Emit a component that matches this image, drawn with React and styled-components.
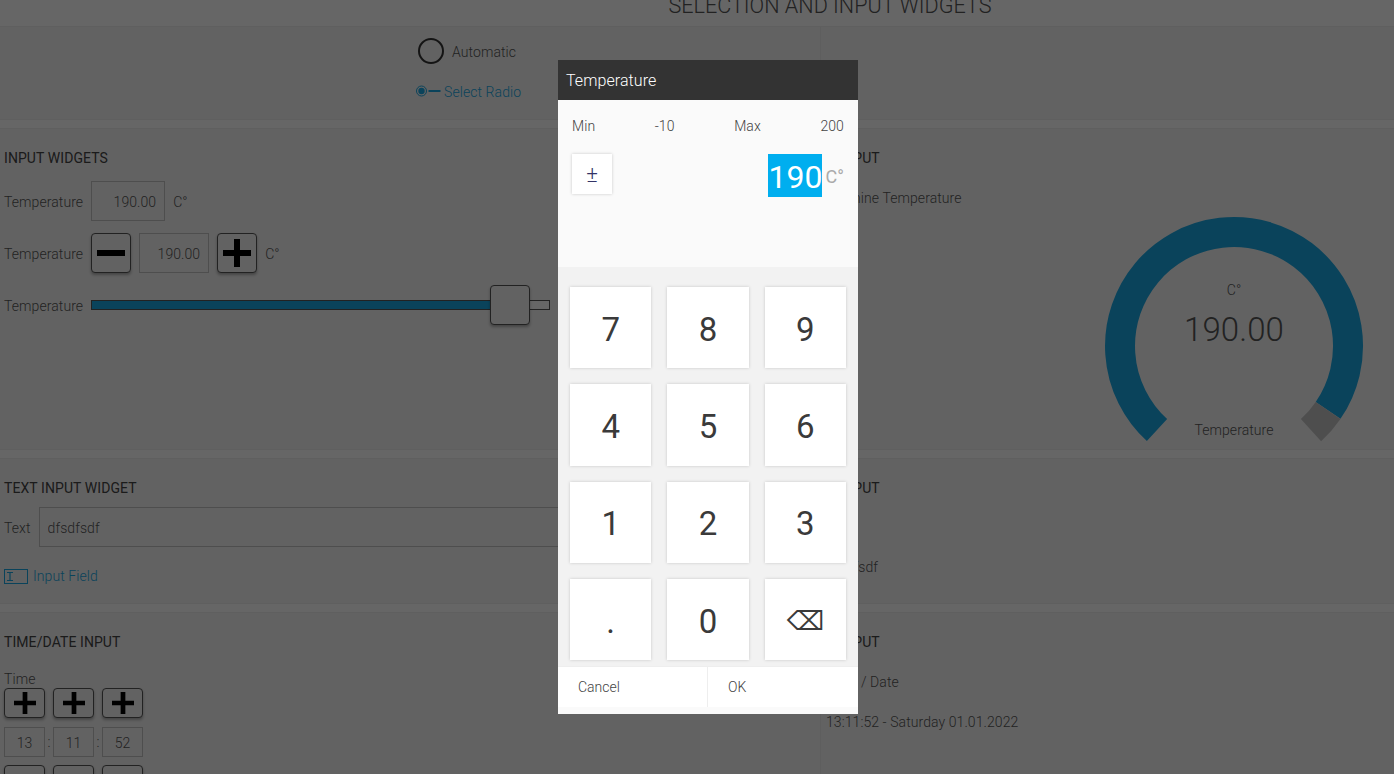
import React from "react";
import styled, { createGlobalStyle } from "styled-components";

const GlobalStyle = createGlobalStyle`
  html, body {
    margin: 0;
    height: 100%;
    overflow: hidden;
    background: #ffffff;
    font-family: Roboto, "Liberation Sans", sans-serif;
    font-weight: 300;
    font-size: 14px;
    letter-spacing: 0.08px;
    color: #555555;
  }
  * {
    box-sizing: border-box;
  }
`;

const ACCENT = "#1aa8e3";
const VALUE = 190;
const MIN = -10;
const MAX = 200;

const Title = styled.h1`
  margin: 0;
  height: 26px;
  padding-left: 266px;
  font-size: 21.6px;
  font-weight: 300;
  letter-spacing: 0;
  line-height: 12px;
  text-align: center;
  text-transform: uppercase;
`;

const Row = styled.section`
  display: grid;
  grid-template-columns: 821px 1fr;
  height: ${(p) => p.$height}px;
  margin-bottom: 8px;
  background: #f5f5f5;
  border-top: 1px solid #ededed;
  border-bottom: 1px solid #ededed;
`;

const LeftCell = styled.div`
  display: flex;
  flex-direction: column;
  padding: 19px 4px 0;
  border-right: 1px solid #ebebeb;
`;

const RightCell = styled.div`
  display: flex;
  flex-direction: column;
  padding: 19px 5px 0;
`;

const RadioCell = styled(LeftCell)`
  padding: 11px 0 0 416px;
`;

const RadioLine = styled.div`
  display: flex;
  align-items: center;
  gap: 8px;
  padding-left: 2px;
`;

const RadioCircle = styled.span`
  width: 26px;
  height: 26px;
  border: 2px solid #333333;
  border-radius: 50%;
`;

const Caption = styled.span`
  height: 20px;
  line-height: 22px;
`;

const SelectLink = styled.div`
  display: flex;
  align-items: center;
  gap: 3px;
  margin-top: 17px;
  height: 20px;
  color: ${ACCENT};
`;

const SectionTitle = styled.h2`
  margin: 0;
  height: 20px;
  color: #444444;
  font-size: 14px;
  font-weight: 400;
  line-height: 20px;
  text-transform: uppercase;
`;

const Stack = styled.div`
  display: flex;
  flex-direction: column;
  gap: 12px;
  margin-top: ${(p) => p.$top}px;
`;

const Field = styled.div`
  display: flex;
  align-items: center;
  gap: 8px;
  height: 40px;
`;

const Box = styled.input`
  width: ${(p) => p.$width}px;
  height: 40px;
  padding: 2px 8px 0;
  border: 1px solid #c4c4c4;
  background: transparent;
  color: #555555;
  font: inherit;
  letter-spacing: inherit;
  text-align: right;
  outline: none;
`;

const TextBox = styled(Box)`
  flex: 1;
  text-align: left;
`;

const PushButton = styled.button`
  display: flex;
  align-items: center;
  justify-content: center;
  width: 40px;
  height: 40px;
  padding: 0;
  border: 1px solid #555555;
  border-radius: 4px;
  background: #f5f5f5;
  box-shadow: 0 2px 3px rgba(0, 0, 0, 0.3);
`;

const SliderTrack = styled.div`
  position: relative;
  flex: 0 0 459px;
  height: 10px;
  border: 1px solid #555555;
  background: #ffffff;
`;

const SliderFill = styled.div`
  height: 100%;
  background: ${ACCENT};
`;

const SliderThumb = styled.div`
  position: absolute;
  top: -16px;
  width: 40px;
  height: 40px;
  border: 1px solid #555555;
  border-radius: 4px;
  background: #f5f5f5;
  box-shadow: 0 2px 3px rgba(0, 0, 0, 0.3);
`;

const HintLink = styled.div`
  display: flex;
  align-items: center;
  gap: 5px;
  height: 20px;
  margin-top: 19px;
  color: ${ACCENT};
`;

const TimeLabel = styled.div`
  margin-top: 18px;
  line-height: 18px;
`;

const TimeGrid = styled.div`
  display: grid;
  grid-template-columns: 41px 8px 41px 8px 41px;
  grid-auto-rows: 30px;
  row-gap: 8.5px;
  align-items: center;
`;

const TimeButton = styled(PushButton)`
  width: 41px;
  height: 30px;
`;

const TimeBox = styled(Box)`
  width: 41px;
  height: 30px;
  padding: 2px 0 0;
  text-align: center;
`;

const Colon = styled.span`
  text-align: center;
`;

const OutputLine = styled.div`
  height: 20px;
  margin-top: ${(p) => p.$top}px;
  line-height: 22px;
`;

const Gauge = styled.div`
  position: relative;
  align-self: flex-end;
  width: 260px;
  height: 232px;
  margin: 9px 25px 0 0;
`;

const GaugeUnit = styled.span`
  position: absolute;
  top: 66px;
  left: 0;
  right: 0;
  text-align: center;
`;

const GaugeValue = styled.span`
  position: absolute;
  top: 94px;
  left: 0;
  right: 0;
  font-size: 33px;
  line-height: 40px;
  text-align: center;
`;

const GaugeLabel = styled.span`
  position: absolute;
  top: 206px;
  left: 0;
  right: 0;
  text-align: center;
`;

const Shade = styled.div`
  position: fixed;
  inset: 0;
  background: rgba(0, 0, 0, 0.6);
`;

const Modal = styled.div`
  position: fixed;
  top: 60px;
  left: 558px;
  display: flex;
  flex-direction: column;
  width: 300px;
  height: 654px;
  background: #fafafa;
  color: #444444;
`;

const ModalHeader = styled.header`
  height: 40px;
  padding-left: 8px;
  background: #333333;
  color: #ffffff;
  font-size: 16px;
  line-height: 41px;
`;

const Readout = styled.div`
  height: 167px;
  padding: 17px 14px 0;
`;

const Limits = styled.div`
  display: flex;
  justify-content: space-between;
  line-height: 18px;
`;

const EntryLine = styled.div`
  display: flex;
  align-items: flex-start;
  margin-top: 19px;
`;

const SignButton = styled.button`
  width: 40px;
  height: 40px;
  padding: 0;
  border: none;
  background: #ffffff;
  box-shadow: 0 0 3px rgba(0, 0, 0, 0.2);
  color: #333366;
  font: inherit;
  font-size: 22px;
`;

const Entered = styled.span`
  margin-left: auto;
  height: 43px;
  background: #00aeef;
  color: #ffffff;
  font-size: 32px;
  font-weight: 400;
  letter-spacing: 0;
  line-height: 47px;
`;

const EnteredUnit = styled.span`
  margin: 9px 0 0 3px;
  color: #aaaaaa;
  font-size: 18px;
  font-weight: 400;
  line-height: 28px;
`;

const Keypad = styled.div`
  display: grid;
  grid-template-columns: repeat(3, 1fr);
  grid-template-rows: repeat(4, 81.33px);
  gap: 16px;
  height: 399px;
  padding: 20px 12px 6px;
  background: #f2f2f2;
`;

const Key = styled.button`
  padding: ${(p) => (p.$glyph ? "4px 0 0" : "3px 0 0")};
  border: none;
  background: #ffffff;
  box-shadow: 0 0 3px rgba(0, 0, 0, 0.18);
  color: #3a3a3a;
  font-family: ${(p) => (p.$glyph ? '"DejaVu Sans", sans-serif' : "inherit")};
  font-size: ${(p) => (p.$glyph ? 26.5 : 33)}px;
  font-weight: 400;
  line-height: 1;
`;

const Footer = styled.footer`
  display: grid;
  grid-template-columns: 150px 1fr;
  height: 41px;
  background: #ffffff;
  border-top: 1px solid #eeeeee;
`;

const FooterButton = styled.button`
  padding: 0 0 0 ${(p) => p.$inset}px;
  border: none;
  border-right: ${(p) => (p.$divided ? "1px solid #eeeeee" : "none")};
  background: transparent;
  color: #444444;
  font: inherit;
  text-align: left;
`;

const PlusIcon = ({ size }) => (
  <svg width={size} height={size} viewBox="0 0 28 28">
    <path d="M11 0h6v11h11v6H17v11h-6V17H0v-6h11z" fill="#000000" />
  </svg>
);

const MinusIcon = () => (
  <svg width="28" height="6" viewBox="0 0 28 6">
    <rect width="28" height="6" fill="#000000" />
  </svg>
);

const RadioIcon = () => (
  <svg width="25" height="12" viewBox="0 0 25 12">
    <circle cx="5.5" cy="6" r="5" fill="none" stroke={ACCENT} />
    <circle cx="5.5" cy="6" r="3.2" fill={ACCENT} />
    <rect x="12.5" y="5" width="12" height="2" fill={ACCENT} />
  </svg>
);

const InputIcon = () => (
  <svg width="24" height="15" viewBox="0 0 24 15">
    <rect x="0.5" y="0.5" width="23" height="14" fill="none" stroke={ACCENT} />
    <path d="M3 3.5h6M3 11.5h6M6 3.5v8" fill="none" stroke={ACCENT} strokeWidth="1.2" />
  </svg>
);

const GaugeArc = () => (
  <svg width="260" height="232" viewBox="0 0 260 232">
    <path d="M53 214.05A114 114 0 1 1 224.1 194.4" fill="none" stroke={ACCENT} strokeWidth="30" />
    <path d="M224.1 194.4A114 114 0 0 1 207 214.05" fill="none" stroke="#c4c4c4" strokeWidth="30" />
  </svg>
);

const KEYS = ["7", "8", "9", "4", "5", "6", "1", "2", "3", ".", "0"];

export default function App() {
  const thumbLeft = ((VALUE - MIN) / (MAX - MIN)) * 419;

  return (
    <>
      <GlobalStyle />
      <Title>Selection and input widgets</Title>

      <Row $height={94}>
        <RadioCell>
          <RadioLine>
            <RadioCircle />
            <Caption>Automatic</Caption>
          </RadioLine>
          <SelectLink>
            <RadioIcon />
            <Caption>Select Radio</Caption>
          </SelectLink>
        </RadioCell>
        <RightCell />
      </Row>

      <Row $height={322}>
        <LeftCell>
          <SectionTitle>Input widgets</SectionTitle>
          <Stack $top={13}>
            <Field>
              <Caption>Temperature</Caption>
              <Box $width={74} readOnly value="190.00" />
              <Caption>C°</Caption>
            </Field>
            <Field>
              <Caption>Temperature</Caption>
              <PushButton>
                <MinusIcon />
              </PushButton>
              <Box $width={70} readOnly value="190.00" />
              <PushButton>
                <PlusIcon size={28} />
              </PushButton>
              <Caption>C°</Caption>
            </Field>
            <Field>
              <Caption>Temperature</Caption>
              <SliderTrack>
                <SliderFill style={{ width: thumbLeft + 10 }} />
                <SliderThumb style={{ left: thumbLeft - 1 }} />
              </SliderTrack>
            </Field>
          </Stack>
        </LeftCell>
        <RightCell>
          <SectionTitle>Output</SectionTitle>
          <OutputLine $top={19}>Machine Temperature</OutputLine>
          <Gauge>
            <GaugeArc />
            <GaugeUnit>C°</GaugeUnit>
            <GaugeValue>190.00</GaugeValue>
            <GaugeLabel>Temperature</GaugeLabel>
          </Gauge>
        </RightCell>
      </Row>

      <Row $height={146}>
        <LeftCell>
          <SectionTitle>Text input widget</SectionTitle>
          <Stack $top={9}>
            <Field>
              <Caption>Text</Caption>
              <TextBox readOnly value="dfsdfsdf" />
            </Field>
          </Stack>
          <HintLink>
            <InputIcon />
            <span>Input Field</span>
          </HintLink>
        </LeftCell>
        <RightCell>
          <SectionTitle>Output</SectionTitle>
          <OutputLine $top={58}>dfsdfsdf</OutputLine>
        </RightCell>
      </Row>

      <Row $height={300}>
        <LeftCell>
          <SectionTitle>Time/Date input</SectionTitle>
          <TimeLabel>Time</TimeLabel>
          <TimeGrid>
            <TimeButton>
              <PlusIcon size={22} />
            </TimeButton>
            <span />
            <TimeButton>
              <PlusIcon size={22} />
            </TimeButton>
            <span />
            <TimeButton>
              <PlusIcon size={22} />
            </TimeButton>
            <TimeBox readOnly value="13" />
            <Colon>:</Colon>
            <TimeBox readOnly value="11" />
            <Colon>:</Colon>
            <TimeBox readOnly value="52" />
            <TimeButton />
            <span />
            <TimeButton />
            <span />
            <TimeButton />
          </TimeGrid>
        </LeftCell>
        <RightCell>
          <SectionTitle>Output</SectionTitle>
          <OutputLine $top={19}>Time / Date</OutputLine>
          <OutputLine $top={20}>13:11:52 - Saturday 01.01.2022</OutputLine>
        </RightCell>
      </Row>

      <Shade />

      <Modal>
        <ModalHeader>Temperature</ModalHeader>
        <Readout>
          <Limits>
            <span>Min</span>
            <span>{MIN}</span>
            <span>Max</span>
            <span>{MAX}</span>
          </Limits>
          <EntryLine>
            <SignButton>±</SignButton>
            <Entered>190</Entered>
            <EnteredUnit>C°</EnteredUnit>
          </EntryLine>
        </Readout>
        <Keypad>
          {KEYS.map((key) => (
            <Key key={key}>{key}</Key>
          ))}
          <Key $glyph>⌫</Key>
        </Keypad>
        <Footer>
          <FooterButton $inset={20} $divided>
            Cancel
          </FooterButton>
          <FooterButton $inset={20}>OK</FooterButton>
        </Footer>
      </Modal>
    </>
  );
}
